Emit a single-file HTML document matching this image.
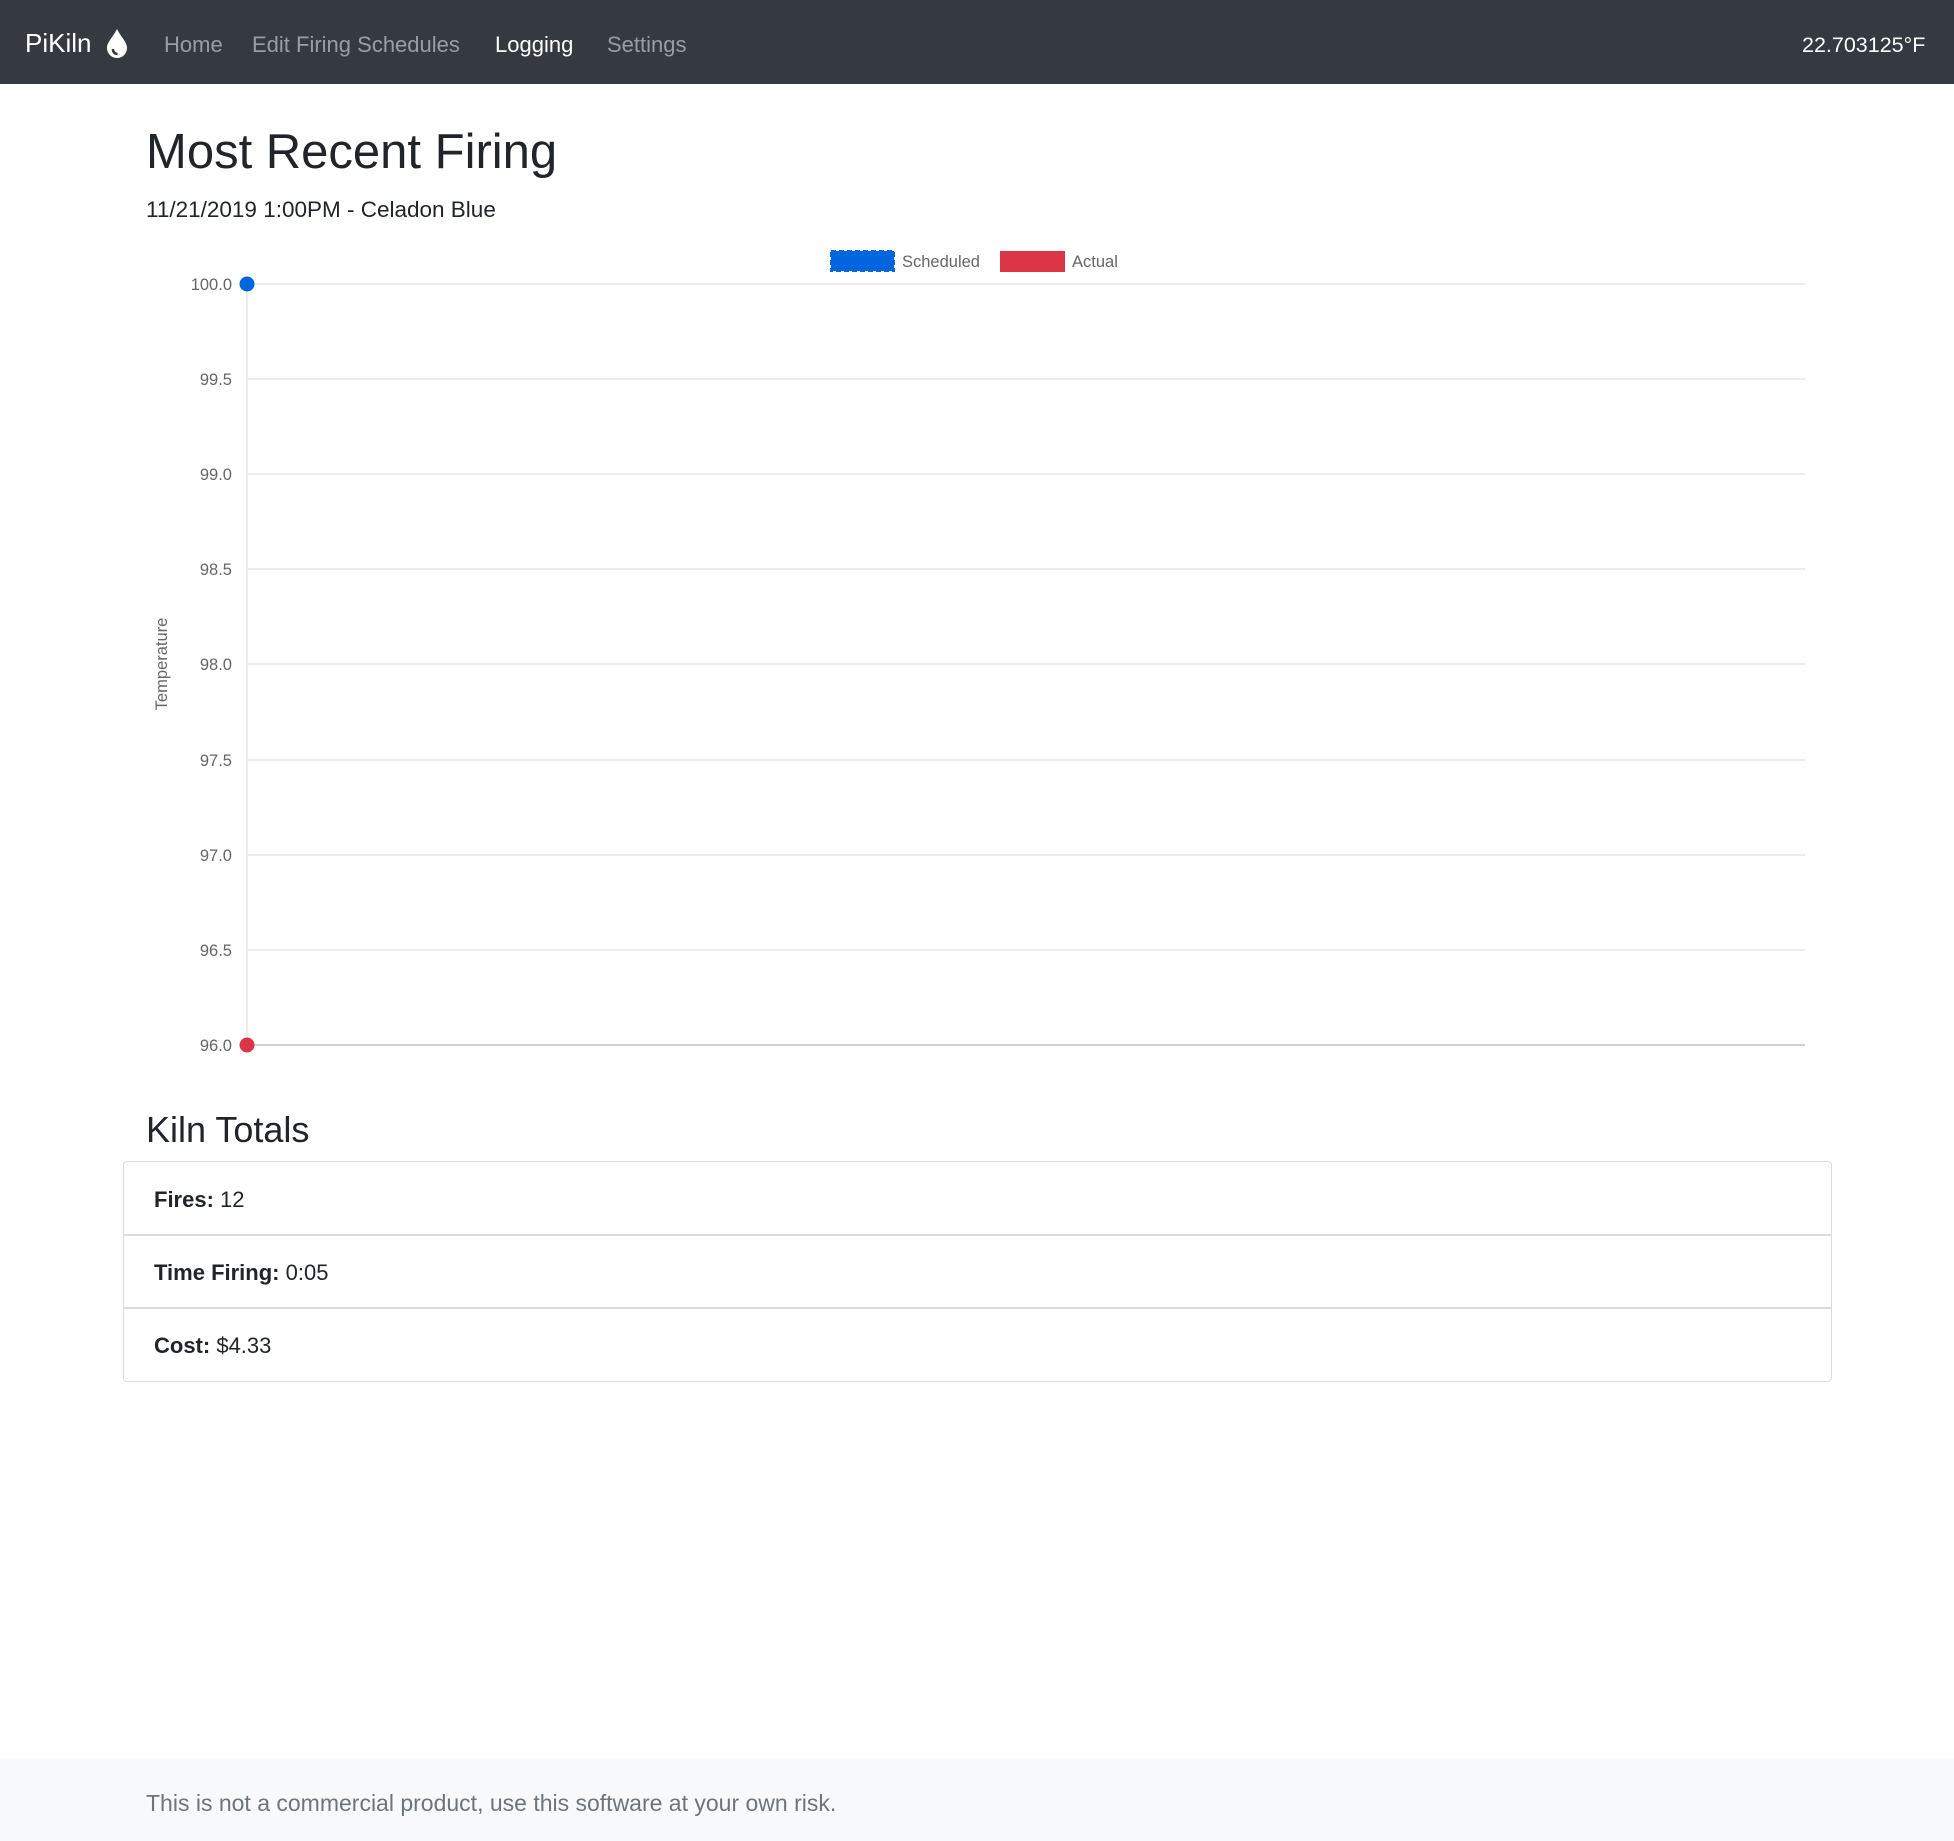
<!DOCTYPE html>
<html><head><meta charset="utf-8"><style>
*{box-sizing:border-box;margin:0;padding:0}
body{width:1954px;height:1841px;position:relative;font-family:"Liberation Sans",sans-serif;color:#212529;background:#fff;overflow:hidden}
.nav{position:absolute;left:0;top:0;width:1954px;height:84px;background:#343a40}
.nav span{position:absolute;top:30px;font-size:22px;line-height:30px;color:rgba(255,255,255,.5);white-space:nowrap}
.abs{position:absolute;white-space:nowrap}
.row{position:absolute;left:123px;width:1709px;border:1.5px solid #dcdcdc;font-size:22px;padding-left:30px;padding-top:3px;display:flex;align-items:center}
</style></head><body>
<div class="nav">
<span style="left:25px;font-size:26px;top:28px;color:#fff">PiKiln</span>
<svg style="position:absolute;left:105px;top:28px" width="24" height="31" viewBox="0 0 24 31"><path d="M12 1 C8 9 2 14 2 20 a10 10 0 0 0 20 0 C22 14 16 9 12 1Z" fill="#fff"/><path d="M8 21 a4.5 4.5 0 0 0 4.5 5" stroke="#343a40" stroke-width="2.5" fill="none"/></svg>
<span style="left:164px">Home</span>
<span style="left:252px">Edit Firing Schedules</span>
<span style="left:495px;color:#fff">Logging</span>
<span style="left:607px">Settings</span>
<span style="left:1802px;color:#fff;font-size:21.5px">22.703125°F</span>
</div>
<div class="abs" style="left:146px;top:122px;font-size:49px;line-height:60px;font-weight:500">Most Recent Firing</div>
<div class="abs" style="left:146px;top:195px;font-size:22.5px;line-height:30px">11/21/2019 1:00PM - Celadon Blue</div>
<svg class="abs" style="left:0;top:240px" width="1954" height="830">
<g font-family="Liberation Sans, sans-serif" font-size="16.5" fill="#666">
<rect x="831" y="11" width="63" height="20" fill="#0066dd" stroke="#0066dd" stroke-width="2" stroke-dasharray="5 3"/>
<text x="902" y="27">Scheduled</text>
<rect x="1000" y="11" width="65" height="21" fill="#dc3545"/>
<text x="1072" y="27">Actual</text>
<g stroke="#e5e5e5" stroke-width="1.5">
<line x1="247" y1="44" x2="1805" y2="44"/><line x1="247" y1="139" x2="1805" y2="139"/><line x1="247" y1="234" x2="1805" y2="234"/><line x1="247" y1="329" x2="1805" y2="329"/><line x1="247" y1="424" x2="1805" y2="424"/><line x1="247" y1="520" x2="1805" y2="520"/><line x1="247" y1="615" x2="1805" y2="615"/><line x1="247" y1="710" x2="1805" y2="710"/>
<line x1="247" y1="44" x2="247" y2="805"/>
</g>
<line x1="247" y1="805" x2="1805" y2="805" stroke="#d0d0d0" stroke-width="2"/>
<g text-anchor="end">
<text x="232" y="50">100.0</text><text x="232" y="145">99.5</text><text x="232" y="240">99.0</text><text x="232" y="335">98.5</text><text x="232" y="430">98.0</text><text x="232" y="526">97.5</text><text x="232" y="621">97.0</text><text x="232" y="716">96.5</text><text x="232" y="811">96.0</text>
</g>
<text transform="translate(167,424) rotate(-90)" text-anchor="middle">Temperature</text>
<circle cx="247" cy="44" r="7.5" fill="#0066dd"/>
<circle cx="247" cy="805" r="7.5" fill="#dc3545"/>
</g></svg>
<div class="abs" style="left:146px;top:1108px;font-size:36px;line-height:44px;font-weight:500">Kiln Totals</div>
<div class="row" style="top:1161px;height:75px;border-radius:4px 4px 0 0"><b>Fires:</b>&nbsp;12</div>
<div class="row" style="top:1234px;height:75px;border-top:1.5px solid #dcdcdc"><b>Time Firing:</b>&nbsp;0:05</div>
<div class="row" style="top:1307px;height:75px;border-radius:0 0 4px 4px"><b>Cost:</b>&nbsp;$4.33</div>
<div class="abs" style="left:0;top:1758px;width:1954px;height:83px;background:#f8f9fa"></div>
<div class="abs" style="left:146px;top:1788px;font-size:23px;line-height:30px;color:#6c757d">This is not a commercial product, use this software at your own risk.</div>
</body></html>
